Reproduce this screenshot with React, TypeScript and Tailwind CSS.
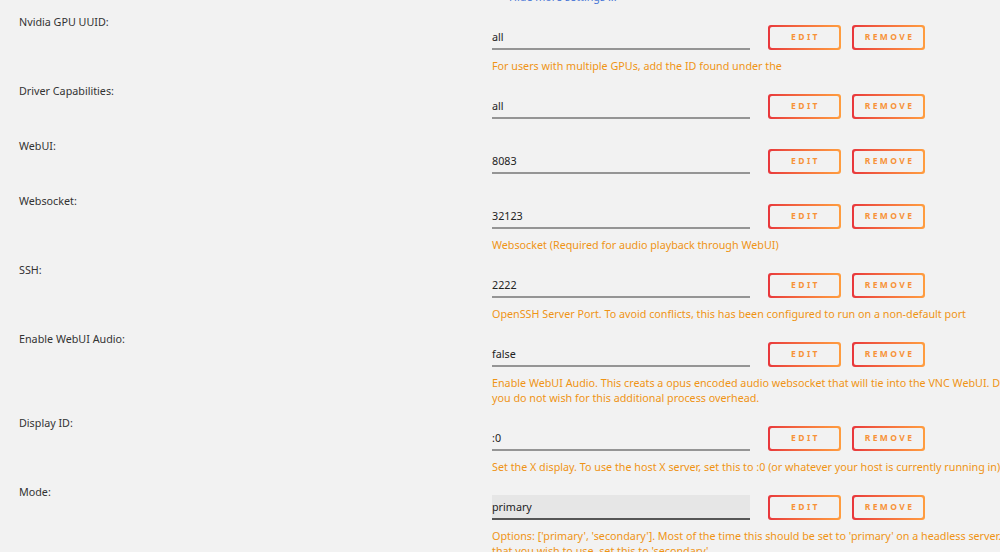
type Setting = {
  label: string;
  value: string;
  help?: string[];
  locked?: boolean;
};

const settings: Setting[] = [
  {
    label: "Nvidia GPU UUID:",
    value: "all",
    help: ["For users with multiple GPUs, add the ID found under the"],
  },
  { label: "Driver Capabilities:", value: "all" },
  { label: "WebUI:", value: "8083" },
  {
    label: "Websocket:",
    value: "32123",
    help: ["Websocket (Required for audio playback through WebUI)"],
  },
  {
    label: "SSH:",
    value: "2222",
    help: [
      "OpenSSH Server Port. To avoid conflicts, this has been configured to run on a non-default port",
    ],
  },
  {
    label: "Enable WebUI Audio:",
    value: "false",
    help: [
      "Enable WebUI Audio. This creats a opus encoded audio websocket that will tie into the VNC WebUI. Disable this if",
      "you do not wish for this additional process overhead.",
    ],
  },
  {
    label: "Display ID:",
    value: ":0",
    help: [
      "Set the X display. To use the host X server, set this to :0 (or whatever your host is currently running in)",
    ],
  },
  {
    label: "Mode:",
    value: "primary",
    locked: true,
    help: [
      "Options: ['primary', 'secondary']. Most of the time this should be set to 'primary' on a headless server. If you have a display",
      "that you wish to use, set this to 'secondary'.",
    ],
  },
];

function OutlineButton({ children }: { children: string }) {
  return (
    <button className="rounded-[3px] bg-gradient-to-r from-[#e8363c] to-[#ff9d3f] p-[2px]">
      <span className="flex h-[21px] w-[69px] items-center justify-center rounded-[2px] bg-[#f2f2f2]">
        <span className="pl-[2px] text-[8.5px] font-bold tracking-[2.4px] text-[#f79239]">{children}</span>
      </span>
    </button>
  );
}

function SettingRow({ s }: { s: Setting }) {
  return (
    <div className={`flex ${s.help ? "pb-[9px]" : "pb-[19px]"}`}>
      <div className="w-[492px] shrink-0 pl-[19px] leading-4 text-[#333]">{s.label}</div>
      <div className="flex-1">
        <div className="mt-[11px] flex items-center">
          <div
            className={`flex h-[25px] w-[258px] items-center border-b-2 pt-[1px] text-[#222] ${
              s.locked ? "border-[#555] bg-[#e6e6e6]" : "border-[#959595]"
            }`}
          >
            {s.value}
          </div>
          <div className="ml-[18px] flex gap-[11px]">
            <OutlineButton>EDIT</OutlineButton>
            <OutlineButton>REMOVE</OutlineButton>
          </div>
        </div>
        {s.help && (
          <div className="mt-[9px] whitespace-nowrap leading-[15px] text-[#ef9415]">
            {s.help.map((line) => (
              <div key={line}>{line}</div>
            ))}
          </div>
        )}
      </div>
    </div>
  );
}

export default function App() {
  return (
    <div className="h-[552px] w-[1000px] overflow-hidden bg-[#f2f2f2] font-['Noto_Sans',sans-serif] text-[10.75px]">
      <div className="-mt-[9px] pl-[494px] leading-[12px] text-[#4a78d6]">++ Hide more settings ...</div>
      <div className="pt-[11px]">
        {settings.map((s) => (
          <SettingRow key={s.label} s={s} />
        ))}
      </div>
    </div>
  );
}
